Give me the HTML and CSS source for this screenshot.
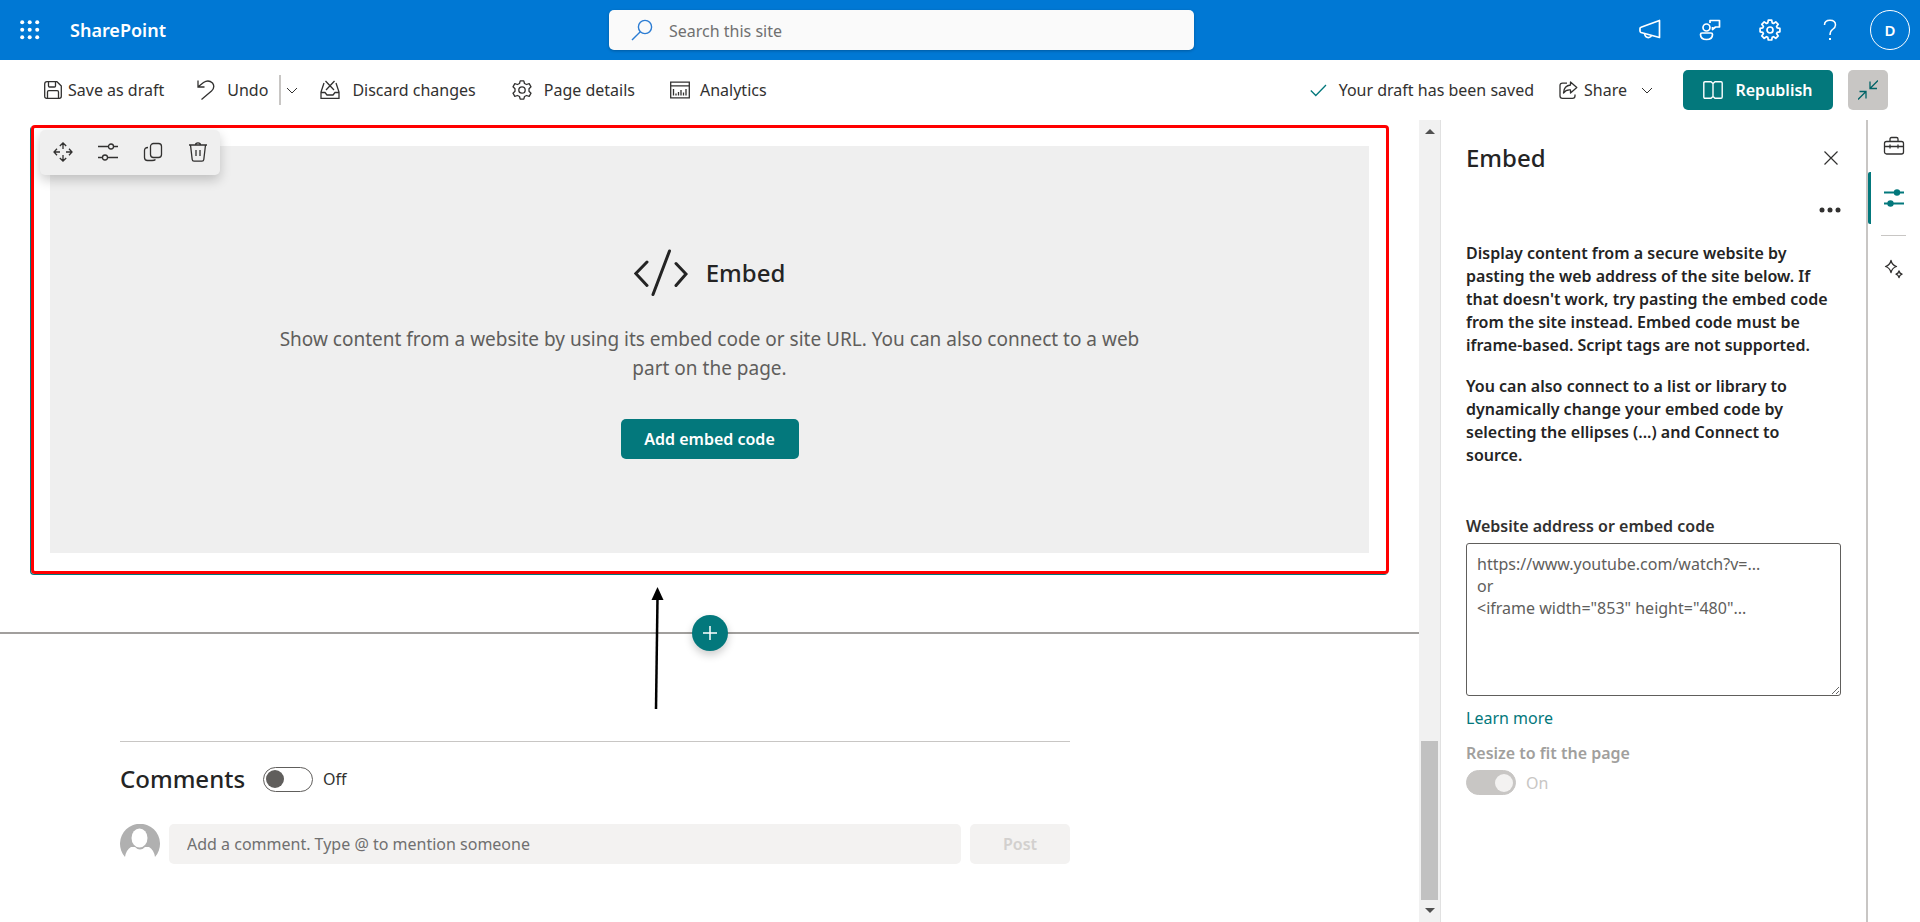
FILE: index.html
```html
<!DOCTYPE html>
<html lang="en">
<head>
<meta charset="utf-8">
<title>SharePoint</title>
<link rel="stylesheet" href="styles.css">
</head>
<body class="app">
<header class="suite">
  <div class="suite-left">
    <button class="icon-btn waffle" aria-label="App launcher">
      <svg width="20" height="20" viewBox="0 0 20 20" fill="currentColor"><circle cx="2.2" cy="2.2" r="2"/><circle cx="9.7" cy="2.2" r="2"/><circle cx="17.2" cy="2.2" r="2"/><circle cx="2.2" cy="9.7" r="2"/><circle cx="9.7" cy="9.7" r="2"/><circle cx="17.2" cy="9.7" r="2"/><circle cx="2.2" cy="17.2" r="2"/><circle cx="9.7" cy="17.2" r="2"/><circle cx="17.2" cy="17.2" r="2"/></svg>
    </button>
    <a class="brand" href="#">SharePoint</a>
  </div>
  <label class="search">
    <svg width="22" height="22" viewBox="0 0 22 22" fill="none" stroke="#2b7cd3" stroke-width="1.4"><circle cx="14" cy="8" r="6.6"/><path d="M9.3 12.8 1 21"/></svg>
    <input class="search-input" type="search" placeholder="Search this site" aria-label="Search this site">
  </label>
  <nav class="suite-right">
    <button class="suite-btn" aria-label="Announcements">
      <svg width="22" height="22" viewBox="0 0 22 22" fill="none" stroke="currentColor" stroke-width="1.7" stroke-linejoin="round"><path d="M20.500 1.500V18.500L2 13.500Q1 13 1 12V9.500Q1 8.500 2 8.200Z"/><path d="M5.500 14.600Q6.500 19 10 18.500Q12 18 12.500 16.500"/></svg>
    </button>
    <button class="suite-btn" aria-label="Feedback">
      <svg width="22" height="22" viewBox="0 0 22 22" fill="none" stroke="currentColor" stroke-width="1.7" stroke-linejoin="round"><circle cx="7.500" cy="8.500" r="3.500"/><path d="M3 14H12Q13.500 14 13.500 15.500Q13.500 20.500 7.500 20.500Q1.500 20.500 1.500 15.500Q1.500 14 3 14Z"/><path d="M11 4V1.500H20.500V8H16.500L13.500 10.500V8"/></svg>
    </button>
    <button class="suite-btn" aria-label="Settings">
      <svg width="22" height="22" viewBox="0 0 22 22" fill="none" stroke="currentColor" stroke-width="1.7" stroke-linejoin="round"><path d="M9.300 1.200h3.400l.5 2.700 1.300.6 2.300-1.600 2.400 2.400-1.600 2.300.6 1.300 2.700.5v3.400l-2.700.5-.6 1.300 1.600 2.300-2.400 2.400-2.300-1.600-1.300.6-.5 2.700H9.300l-.5-2.700-1.300-.6-2.300 1.600-2.400-2.400 1.600-2.300-.6-1.300-2.700-.5V9.400l2.700-.5.6-1.300L2.800 5.300l2.400-2.400 2.300 1.600 1.300-.6Z"/><circle cx="11" cy="11" r="3"/></svg>
    </button>
    <button class="suite-btn" aria-label="Help">
      <svg width="22" height="22" viewBox="0 0 22 22" fill="none" stroke="currentColor" stroke-width="1.500"><path d="M5.500 6Q5.500 1.200 11 1.200Q16.500 1.200 16.500 6Q16.500 8.500 13.500 10.500Q11 12.200 11 16"/><path d="M11 19V21" stroke-width="2"/></svg>
    </button>
    <button class="suite-btn" aria-label="Account"><span class="persona">D</span></button>
  </nav>
</header>

<div class="commands">
  <button class="cmd cmd-save">
    <svg width="18" height="18" viewBox="0 0 18 18" fill="none" stroke="currentColor" stroke-width="1.3" stroke-linejoin="round"><path d="M3 .7H13L17.300 5V15.300Q17.300 17.300 15.300 17.300H2.700Q.7 17.300.7 15.300V3Q.7.7 3 .7Z"/><path d="M4.500.7V5Q4.500 6 5.500 6H10.500Q11.500 6 11.500 5V.7M3.500 17.300V11Q3.500 9.700 4.800 9.700H13.200Q14.500 9.700 14.500 11V17.300"/></svg>
    Save as draft</button>
  <button class="cmd cmd-undo">
    <svg width="18" height="20" viewBox="0 0 18 20" fill="none" stroke="currentColor" stroke-width="1.300"><path d="M1 .5V7H7.500M1.200 6.800 6.500 2.500Q11.500-.8 15.500 3Q18.500 7 14.500 11L4.500 19.500"/></svg>
    Undo</button>
  <button class="cmd cmd-split" aria-label="More undo options">
    <svg width="12" height="7" viewBox="0 0 12 7" fill="none" stroke="currentColor"><path d="M1 1 6 6 11 1"/></svg>
  </button>
  <button class="cmd cmd-discard">
    <svg width="20" height="20" viewBox="0 0 20 20" fill="none" stroke="currentColor" stroke-width="1.300"><path d="M4 3 1 12V18.300H19V12L16 3M1 12.500H5L7 15H13L15 12.500H19"/><path d="M5.500 1 14 10M14.500 1 6 10"/></svg>
    Discard changes</button>
  <button class="cmd cmd-details">
    <svg width="20" height="20" viewBox="0 0 20 20" fill="none" stroke="currentColor" stroke-width="1.300" stroke-linejoin="round"><path d="M8.200.8H11.800L12.500 3.500 14.500 4.500 17.200 3.700 19 6.800 17 8.800V11.200L19 13.200 17.200 16.300 14.500 15.500 12.500 16.500 11.800 19.200H8.200L7.500 16.500 5.500 15.500 2.800 16.300 1 13.200 3 11.200V8.800L1 6.800 2.800 3.700 5.500 4.500 7.500 3.500Z"/><circle cx="10" cy="10" r="3.200"/></svg>
    Page details</button>
  <button class="cmd cmd-analytics">
    <svg width="20" height="18" viewBox="0 0 20 18" fill="none" stroke="currentColor" stroke-width="1.300"><path d="M.7 1.200H19.300V16.800H.7ZM.7 4.800H19.300"/><path d="M3.500 8V14.500M6 12.500V14.500M8.500 11V14.500M11 9V14.500M13.500 11.500V14.500M16 8V14.500"/></svg>
    Analytics</button>
  <div class="status">
    <svg width="17" height="13" viewBox="0 0 17 13" fill="none" stroke="#03787c" stroke-width="1.300"><path d="M.8 6.500 5.800 11.500 16 1"/></svg>
    <span>Your draft has been saved</span>
  </div>
  <button class="cmd cmd-share">
    <svg width="19" height="18" viewBox="0 0 19 18" fill="none" stroke="currentColor" stroke-width="1.300" stroke-linejoin="round"><path d="M8 2.200H3.500Q1 2.200 1 4.500V15Q1 17.300 3.500 17.300H13.500Q16 17.300 16 15V13.500"/><path d="M11.500 1 17.800 6.500 11.500 12V9Q7 8.500 4.500 12Q5 4.500 11.500 4Z"/></svg>
    Share
    <svg class="caret" width="12" height="7" viewBox="0 0 12 7" fill="none" stroke="currentColor"><path d="M1 1 6 6 11 1"/></svg>
  </button>
  <button class="primary republish">
    <svg width="20" height="18" viewBox="0 0 20 18" fill="none" stroke="currentColor" stroke-width="1.400"><path d="M2 .8H8L10 2.500 12 .8H18Q19.200.8 19.200 2V16Q19.200 17.200 18 17.200H12L10 15.500 8 17.200H2Q.8 17.200.8 16V2Q.8.8 2 .8ZM10 2.500V15.500"/></svg>
    Republish</button>
  <button class="collapse" aria-label="Collapse">
    <svg width="20" height="20" viewBox="0 0 20 20" fill="none" stroke="currentColor" stroke-width="1.300"><path d="M20 .5 12 8.500M12 1.500V8.500H19M0 19.500 8 11.500M1.500 11.500H8V18.500"/></svg>
  </button>
</div>

<div class="workspace">
  <main class="canvas">
    <section class="webpart">
      <div class="part-tools">
        <button class="tool" aria-label="Move"><svg width="20" height="20" viewBox="0 0 20 20" fill="none" stroke="currentColor" stroke-width="1.300"><path d="M10 1V7M10 13V19M1 10H7M13 10H19M6.800 4 10 1 13.200 4M6.800 16 10 19 13.200 16M4 6.800 1 10 4 13.200M16 6.800 19 10 16 13.200"/></svg></button>
        <button class="tool" aria-label="Edit properties"><svg width="22" height="20" viewBox="0 0 22 20" fill="none" stroke="currentColor" stroke-width="1.300"><path d="M1 4.500H11.500M16.500 4.500H21M1 15.500H5.500M10.500 15.500H21"/><circle cx="14" cy="4.500" r="2.500"/><circle cx="8" cy="15.500" r="2.500"/></svg></button>
        <button class="tool" aria-label="Duplicate"><svg width="20" height="20" viewBox="0 0 20 20" fill="none" stroke="currentColor" stroke-width="1.300"><rect x="7.500" y="1.500" width="11" height="14" rx="3"/><path d="M5 5.500Q1.500 5.500 1.500 8.500V15.500Q1.500 18.500 4.500 18.500H9Q11.500 18.500 12.500 17.500"/></svg></button>
        <button class="tool" aria-label="Delete"><svg width="20" height="20" viewBox="0 0 20 20" fill="none" stroke="currentColor" stroke-width="1.300"><path d="M1 3H19M7.500 3Q7.500.8 10 .8Q12.500.8 12.500 3M2.500 3 4.200 17.500Q4.400 19.200 6 19.200H14Q15.600 19.200 15.800 17.500L17.500 3M8 8V14M12 8V14"/></svg></button>
      </div>
      <div class="placeholder">
        <h2 class="placeholder-title">
          <svg width="54" height="48" viewBox="0 0 54 48" fill="none" stroke="#242424" stroke-width="3" stroke-linecap="round"><path d="M13 13 1.800 24.500 13 36.500M42 14.500 52 25 42 36.500M35.500 2 19 45.500"/></svg>
          Embed</h2>
        <p class="placeholder-text">Show content from a website by using its embed code or site URL. You can also connect to a web part on the page.</p>
        <button class="primary add-code">Add embed code</button>
      </div>
    </section>
    <div class="section-line">
      <button class="add" aria-label="Add a section"><svg width="16" height="16" viewBox="0 0 16 16" fill="none" stroke="currentColor" stroke-width="1.500"><path d="M8 1V15M1 8H15"/></svg></button>
      <svg class="pointer" width="20" height="124" viewBox="0 0 20 124"><path d="M9 123 10.500 12" stroke="#000" stroke-width="2.500"/><path d="M10.500 1 16.500 14H4.500Z"/></svg>
    </div>
    <section class="comments">
      <div class="comments-head">
        <h2 class="comments-title">Comments</h2>
        <label class="switch"><input class="toggle" type="checkbox" role="switch">Off</label>
      </div>
      <form class="comment-row">
        <svg width="40" height="40" viewBox="0 0 40 40"><path fill="#b0b0b0" d="M5 33A20 20 0 1 1 35 33Q34 26 29 23L25 23Q20 28 15 23L11 23Q6 26 5 33Z"/><ellipse cx="19.500" cy="14" rx="8" ry="9.500" fill="#fff"/></svg>
        <input class="comment-input" type="text" placeholder="Add a comment. Type @ to mention someone" aria-label="Add a comment">
        <button class="post" type="button" disabled>Post</button>
      </form>
    </section>
  </main>

  <div class="scroll" aria-hidden="true">
    <svg width="10" height="5" viewBox="0 0 10 5" fill="#505050"><path d="M0 5 5 0 10 5Z"/></svg>
    <div class="track"><div class="thumb"></div></div>
    <svg width="10" height="5" viewBox="0 0 10 5" fill="#505050"><path d="M0 0H10L5 5Z"/></svg>
  </div>

  <aside class="panel">
    <div class="panel-head">
      <h2 class="panel-title">Embed</h2>
      <button class="icon-btn" aria-label="Close"><svg width="16" height="16" viewBox="0 0 16 16" fill="none" stroke="currentColor" stroke-width="1.200"><path d="M1.500 1.500 14.500 14.500M14.500 1.500 1.500 14.500"/></svg></button>
    </div>
    <button class="icon-btn more" aria-label="More options"><svg width="22" height="6" viewBox="0 0 22 6" fill="currentColor"><circle cx="3" cy="3" r="2.500"/><circle cx="11" cy="3" r="2.500"/><circle cx="19" cy="3" r="2.500"/></svg></button>
    <p class="help">Display content from a secure website by pasting the web address of the site below. If that doesn't work, try pasting the embed code from the site instead. Embed code must be iframe-based. Script tags are not supported.</p>
    <p class="help">You can also connect to a list or library to dynamically change your embed code by selecting the ellipses (...) and Connect to source.</p>
    <label class="field-label" for="embed">Website address or embed code</label>
    <textarea class="field" id="embed" placeholder="https://www.youtube.com/watch?v=...&#10;or&#10;&lt;iframe width=&quot;853&quot; height=&quot;480&quot;..."></textarea>
    <a class="learn" href="#">Learn more</a>
    <span class="field-label muted" id="resize">Resize to fit the page</span>
    <label class="switch off"><input class="toggle" type="checkbox" role="switch" aria-labelledby="resize" checked disabled>On</label>
  </aside>

  <nav class="rail">
    <button class="rail-btn" aria-label="Toolbox"><svg width="22" height="20" viewBox="0 0 22 20" fill="none" stroke="currentColor" stroke-width="1.300"><rect x="1.500" y="5.500" width="19" height="12.500" rx="2"/><path d="M7 5.500V3Q7 1.500 8.500 1.500H13.500Q15 1.500 15 3V5.500M1.500 10.500H20.500M7 8.500V12.500M15 8.500V12.500"/></svg></button>
    <button class="rail-btn active" aria-label="Properties"><svg width="20" height="20" viewBox="0 0 20 20" fill="currentColor" stroke="currentColor" stroke-width="1.800"><path d="M0 4.500H20M0 15.500H20"/><circle cx="13" cy="4.500" r="2.300"/><circle cx="6.500" cy="15.500" r="2.300"/></svg></button>
    <div class="rail-rule"></div>
    <button class="rail-btn" aria-label="Design ideas"><svg width="20" height="20" viewBox="0 0 20 20" fill="none" stroke="currentColor" stroke-width="1.300" stroke-linejoin="round"><path d="M7 1.500Q8 6 12.500 7.500Q8 9 7 13.500Q6 9 1.500 7.500Q6 6 7 1.500ZM15 12Q15.600 14.500 18 15.200Q15.600 16 15 18.500Q14.400 16 12 15.200Q14.400 14.500 15 12Z"/></svg></button>
  </nav>
</div>
</body>
</html>
```
FILE: styles.css
```css
*, *::before, *::after { box-sizing: border-box; }

.app {
  margin: 0;
  min-height: 100vh;
  display: grid;
  grid-template-rows: 60px 60px 1fr;
  font: 16px/24px "Segoe UI", "Noto Sans", "Open Sans", sans-serif;
  color: #323130;
  background: #fff;
}

button, input, textarea { font: inherit; color: inherit; }
button { border: 0; padding: 0; background: none; }
h2, p { margin: 0; }
a { text-decoration: none; }
svg { flex: none; display: block; }

.icon-btn { display: flex; align-items: center; justify-content: center; }

/* Suite header */
.suite {
  display: grid;
  grid-template-columns: 609fr 585fr 726fr;
  align-items: center;
  background: #0078d4;
  color: #fff;
}
.suite-left { display: flex; align-items: center; gap: 10px; }
.waffle { width: 60px; height: 60px; }
.brand { color: #fff; font-size: 18px; font-weight: 600; }
.search {
  display: flex;
  align-items: center;
  gap: 16px;
  height: 40px;
  padding: 0 22px;
  background: #fafafa;
  border-radius: 5px;
  box-shadow: 0 1px 3px rgba(0, 0, 0, .25);
}
.search-input { flex: 1; border: 0; padding: 2px 0 0; background: none; outline: 0; color: #323130; }
.search-input::placeholder { color: #707070; }
.suite-right { display: flex; justify-content: flex-end; }
.suite-btn { display: flex; align-items: center; justify-content: center; width: 60px; height: 60px; }
.persona {
  display: flex;
  align-items: center;
  justify-content: center;
  width: 40px;
  height: 40px;
  border: 1px solid #fff;
  border-radius: 50%;
  font-size: 15px;
  font-weight: 600;
}

/* Command bar */
.commands { display: flex; align-items: center; padding: 0 32px 0 44px; white-space: nowrap; }
.cmd { display: flex; align-items: center; gap: 12px; }
.cmd-save { gap: 6px; margin-right: 33px; }
.cmd-undo { margin-right: 11px; }
.cmd-split { height: 30px; padding-left: 5px; border-left: 2px solid #c8c6c4; margin-right: 22px; }
.cmd-discard { margin-right: 36px; }
.cmd-details { margin-right: 35px; }
.cmd-analytics { gap: 10px; }
.status { display: flex; align-items: center; gap: 12px; margin-left: auto; }
.cmd-share { gap: 6px; margin: 0 30px 0 25px; }
.caret { margin-left: 8px; }
.primary {
  display: flex;
  align-items: center;
  justify-content: center;
  gap: 12px;
  height: 40px;
  padding: 0 20px;
  border-radius: 5px;
  background: #03787c;
  color: #fff;
  font-weight: 600;
}
.republish { width: 150px; }
.add-code { width: 178px; }
.collapse {
  display: flex;
  align-items: center;
  justify-content: center;
  width: 40px;
  height: 40px;
  margin-left: 15px;
  border-radius: 5px;
  background: #c8c6c4;
  color: #026467;
}

/* Workspace */
.workspace { display: grid; grid-template-columns: minmax(0, 1fr) 22px 425px 54px; }
.canvas { padding-top: 5px; }

.webpart {
  position: relative;
  margin: 0 30px 0 31px;
  padding: 18px 17px 18px 16px;
  border: 3px solid #f00;
  border-radius: 4px;
  box-shadow: -1px 1px 0 #03787c;
}
.part-tools {
  position: absolute;
  top: 2px;
  left: 6px;
  display: flex;
  height: 45px;
  padding-bottom: 2px;
  border-radius: 5px;
  background: #efefef;
  box-shadow: 0 5px 12px rgba(0, 0, 0, .2);
}
.tool { display: flex; align-items: center; justify-content: center; width: 45px; }
.placeholder {
  display: flex;
  flex-direction: column;
  align-items: center;
  min-height: 407px;
  padding-top: 103px;
  background: #efefef;
}
.placeholder-title {
  display: flex;
  align-items: center;
  gap: 18px;
  font-size: 24px;
  line-height: 48px;
  font-weight: 500;
  color: #242424;
}
.placeholder-text {
  max-width: 870px;
  margin: 28px 0 36px;
  font-size: 19px;
  line-height: 29px;
  text-align: center;
  color: #605e5c;
}
.section-line {
  position: relative;
  display: flex;
  align-items: center;
  justify-content: center;
  height: 36px;
  margin-top: 41px;
  background: linear-gradient(#a19f9d, #a19f9d) center / 100% 2px no-repeat;
}
.add {
  display: flex;
  align-items: center;
  justify-content: center;
  width: 36px;
  height: 36px;
  border-radius: 50%;
  background: #03787c;
  color: #fff;
  box-shadow: 0 4px 8px rgba(0, 0, 0, .2);
}
.pointer { position: absolute; top: -29px; left: calc(50% - 63px); }

.comments { max-width: 950px; margin: 90px 0 0 120px; border-top: 1px solid #c8c6c4; }
.comments-head { display: flex; align-items: center; gap: 18px; padding: 19px 0 27px; }
.comments-title { font-size: 24px; line-height: 36px; font-weight: 500; color: #242424; }
.switch { display: flex; align-items: center; gap: 10px; }
.toggle {
  appearance: none;
  display: flex;
  align-items: center;
  width: 50px;
  height: 25px;
  margin: 0;
  padding: 0 2px;
  border: 1px solid #605e5c;
  border-radius: 13px;
}
.toggle::before { content: ""; width: 18px; height: 18px; border-radius: 50%; background: #605e5c; }
.toggle:checked { justify-content: flex-end; }
.toggle:disabled { border-color: #c8c6c4; background: #c8c6c4; }
.toggle:disabled::before { background: #f3f2f1; }
.comment-row { display: flex; gap: 9px; }
.comment-input {
  flex: 1;
  height: 40px;
  padding: 0 18px;
  border: 0;
  border-radius: 5px;
  background: #f3f2f1;
}
.comment-input::placeholder { color: #707070; }
.post { width: 100px; border-radius: 5px; background: #f3f2f1; color: #d2d0ce; font-weight: 600; }

/* Scroll bar */
.scroll { display: flex; flex-direction: column; align-items: center; padding: 9px 2px; background: #f1f1f1; border-right: 1px solid #e1e1e1; }
.track { flex: 1; display: flex; align-items: flex-end; align-self: stretch; margin: 8px 0; }
.thumb { width: 17px; height: 21%; background: #c1c1c1; }

/* Property pane */
.panel { display: flex; flex-direction: column; padding: 22px 25px 0; }
.panel-head { display: flex; align-items: center; justify-content: space-between; padding-right: 2px; }
.panel-title { font-size: 24px; line-height: 32px; font-weight: 500; color: #242424; }
.more { align-self: flex-end; height: 24px; margin: 24px 0 20px; }
.help { margin-bottom: 18px; padding-right: 5px; line-height: 23px; font-weight: 600; color: #242424; }
.field-label { margin: 29px 0 5px; font-weight: 600; }
.field {
  width: 100%;
  height: 153px;
  padding: 9px 10px;
  border: 1px solid #605e5c;
  border-radius: 3px;
  line-height: 22px;
  resize: both;
}
.field::placeholder { color: #605e5c; }
.learn { margin-top: 10px; color: #03787c; align-self: flex-start; }
.muted { margin: 11px 0 5px; color: #a19f9d; }
.off { color: #c8c6c4; }

/* Tool rail */
.rail { display: flex; flex-direction: column; align-items: stretch; border-left: 2px solid #c8c6c4; }
.rail-btn { display: flex; align-items: center; justify-content: center; height: 52px; border-left: 3px solid transparent; border-right: 3px solid transparent; }
.rail-btn.active { border-left-color: #03787c; border-radius: 2px; color: #03787c; }
.rail-rule { height: 1px; margin: 11px 14px 7px 13px; background: #c8c6c4; }
```
